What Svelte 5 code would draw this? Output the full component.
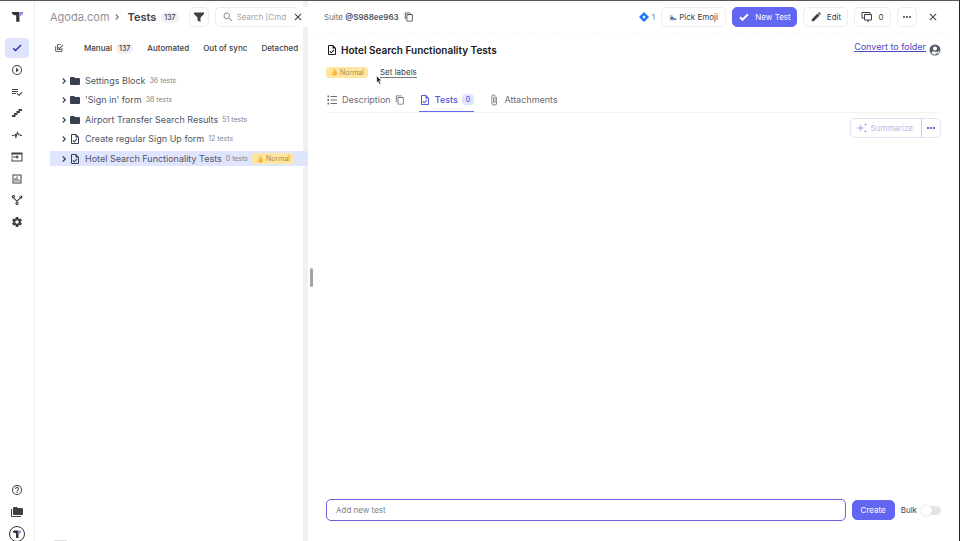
<script>
	const icons = {
		check: "M21 7 9 19l-5.500-5.500 1.900-1.900L9 15.200 19.100 5.100z",
		play: "M12 20a8 8 0 0 1 0-16 8 8 0 0 1 0 16m0-18a10 10 0 1 0 0 20 10 10 0 0 0 0-20m-2 14.500 6-4.500-6-4.500z",
		listCheck: "M14 10H2v2h12zm0-4H2v2h12zM2 16h8v-2H2zm19.500-4.500L23 13l-6.990 7-4.510-4.500L13 14l3.010 3z",
		stairs: "M15 4h7v4h-4v4h-5v4H9v4H2v-4h4v-4h5V8h4z",
		pulse: "M2 12h4l2-3 2 2 3-7 3 7 2-1 2 2h2v2h-3l-2-2-2 1-2-4-3 11-3-8-2 2H2z",
		importBox: "M1 3h22v18H1v-6h2v4h18V7H3v2H1zm10 5 5 4-5 4v-3H1v-2h10z",
		chart: "M3 3h18v18H3zm2 2v14h14V5zm2 5h2v7H7zm4-3h2v10h-2zm4 6h2v4h-2z",
		branch: "M5 2a3 3 0 0 1 1.500 5.600L12 13l5.500-5.400a3 3 0 1 1 1.700 1.200L13 15v1.200a3 3 0 1 1-2 0V15L4.800 8.800A3.400 3.400 0 0 1 5 2m0 2a1 1 0 1 0 0 2 1 1 0 0 0 0-2m14 0a1 1 0 1 0 0 2 1 1 0 0 0 0-2m-7 14a1 1 0 1 0 0 2 1 1 0 0 0 0-2",
		gear: "M12 15.500A3.500 3.500 0 0 1 8.500 12 3.500 3.500 0 0 1 12 8.500a3.500 3.500 0 0 1 3.500 3.500 3.500 3.500 0 0 1-3.500 3.500m7.430-2.530c.04-.32.07-.64.07-.97s-.03-.66-.07-1l2.110-1.630c.19-.15.24-.42.12-.64l-2-3.460c-.12-.22-.39-.31-.61-.22l-2.490 1c-.52-.39-1.060-.73-1.690-.98l-.37-2.650A.506.506 0 0 0 14 2h-4c-.25 0-.46.18-.5.42l-.37 2.650c-.63.25-1.170.59-1.690.98l-2.490-1c-.22-.09-.49 0-.61.22l-2 3.460c-.13.22-.07.49.12.64L4.570 11c-.04.34-.07.67-.07 1s.03.65.07.97l-2.110 1.660c-.19.15-.25.42-.12.64l2 3.460c.12.22.39.3.61.22l2.490-1.010c.52.4 1.060.74 1.690.99l.37 2.650c.04.24.25.42.5.42h4c.25 0 .46-.18.5-.42l.37-2.650c.63-.26 1.170-.59 1.690-.99l2.490 1.010c.22.08.49 0 .61-.22l2-3.460c.12-.22.07-.49-.12-.64z",
		help: "M11 18h2v-2h-2zm1-16a10 10 0 1 0 0 20 10 10 0 0 0 0-20m0 18a8 8 0 0 1 0-16 8 8 0 0 1 0 16m0-14a4 4 0 0 0-4 4h2a2 2 0 0 1 4 0c0 2-3 1.750-3 5h2c0-2.250 3-2.500 3-5a4 4 0 0 0-4-4",
		folders: "M22 4h-8l-2-2H6a2 2 0 0 0-2 2v12a2 2 0 0 0 2 2h16a2 2 0 0 0 2-2V6a2 2 0 0 0-2-2M2 6H0v14a2 2 0 0 0 2 2h18v-2H2z",
		folder: "M10 4H4a2 2 0 0 0-2 2v12a2 2 0 0 0 2 2h16a2 2 0 0 0 2-2V8a2 2 0 0 0-2-2h-8z",
		file: "M14 2H6a2 2 0 0 0-2 2v16a2 2 0 0 0 2 2h12a2 2 0 0 0 2-2V8zm4 18H6V4h7v5h5zm-7.500-1L7 15.500 8.500 14l2 2 5-5 1.500 1.500z",
		chevron: "M8 17 13 12 8 7l2-2 7 7-7 7z",
		checks: "M20 12v7a2 2 0 0 1-2 2H6a3 3 0 0 1-3-3V8h2v10l1 1h12v-7zM16 3H9a2 2 0 0 0-2 2v10a2 2 0 0 0 2 2h8a2 2 0 0 0 2-2v-4l-2 2v2H9V5h7zm5 1 1.500 1.500L13 15l-4-4 1.500-1.500L13 12z",
		filter: "M2 3h20v3l-7 7v9l-6-3v-6L2 6z",
		search: "M9.500 3a6.500 6.500 0 0 1 4.940 10.730l.27.27h.79l5 5-1.500 1.500-5-5v-.79l-.27-.27A6.500 6.500 0 1 1 9.500 3m0 2a4.500 4.500 0 1 0 0 9 4.500 4.500 0 0 0 0-9",
		close: "M19 6.410 17.590 5 12 10.590 6.410 5 5 6.410 10.590 12 5 17.590 6.410 19 12 13.410 17.590 19 19 17.590 13.410 12z",
		copy: "M19 21H8V7h11m0-2H8a2 2 0 0 0-2 2v14a2 2 0 0 0 2 2h11a2 2 0 0 0 2-2V7a2 2 0 0 0-2-2m-3-4H4a2 2 0 0 0-2 2v14h2V3h12z",
		boldCheck: "M9 20.400 2.600 14l2.800-2.800L9 14.700 18.600 5.100l2.800 2.800z",
		pencil: "m3 21 1-5L15 5l4 4L8 20zM16 4l2-2 4 4-2 2z",
		comments: "M3 2h14a2 2 0 0 1 2 2v2h1a2 2 0 0 1 2 2v9a2 2 0 0 1-2 2h-3l-4 4v-4H8a2 2 0 0 1-2-2v-2H3a2 2 0 0 1-2-2V4a2 2 0 0 1 2-2m0 2v9h3V8a2 2 0 0 1 2-2h9V4zm5 4v9h12V8z",
		dots: "M16 12a2 2 0 1 1 4 0 2 2 0 0 1-4 0m-6 0a2 2 0 1 1 4 0 2 2 0 0 1-4 0m-6 0a2 2 0 1 1 4 0 2 2 0 0 1-4 0",
		list: "M9 4h13v2H9zm0 7h13v2H9zm0 7h13v2H9zM3 3h3v4H3zm0 7h3v4H3zm0 7h3v4H3z",
		clip: "M16.500 6v11.500a4 4 0 0 1-8 0V5a2.500 2.500 0 0 1 5 0v10.500a1 1 0 0 1-2 0V6H10v9.500a2.500 2.500 0 0 0 5 0V5a4 4 0 0 0-8 0v12.500a5.500 5.500 0 0 0 11 0V6z",
		sparkle: "m9 4 2 6 6 2-6 2-2 6-2-6-6-2 6-2zM19 1l1 3 3 1-3 1-1 3-1-3-3-1 3-1zm0 14 1 3 3 1-3 1-1 3-1-3-3-1 3-1z",
		user: "M12 1a11 11 0 1 0 0 22 11 11 0 0 0 0-22M5 18c0-2 4-4 7-3l3 4-2 2c-3 0-6-1-8-3m10-3 2 2 4-4v3l-4 4-4-4zM12 5a4 4 0 1 1 0 8 4 4 0 0 1 0-8"
	};

	const nav = [
		["Tests", "check"],
		["Runs", "play"],
		["Plans", "listCheck"],
		["Steps", "stairs"],
		["Pulse", "pulse"],
		["Imports", "importBox"],
		["Analytics", "chart"],
		["Branches", "branch"],
		["Settings", "gear"]
	];

	const suites = [
		{ name: "Settings Block", count: 36, icon: "folder" },
		{ name: "'Sign in' form", count: 38, icon: "folder" },
		{ name: "Airport Transfer Search Results", count: 51, icon: "folder" },
		{ name: "Create regular Sign Up form", count: 12, icon: "file" },
		{ name: "Hotel Search Functionality Tests", count: 0, icon: "file", active: true }
	];

	let title = $state("");
	let bulk = $state(false);
</script>

{#snippet icon(name)}
	<svg class="icon icon-{name}" viewBox="0 0 24 24" aria-hidden="true"><path d={icons[name]} fill-rule={name === "user" || name === "branch" ? "evenodd" : "nonzero"} /></svg>
{/snippet}

{#snippet logo()}
	<svg class="logo" viewBox="0 0 20 20" aria-hidden="true">
		<path class="ink" d="M1 3h12v15H8V8H5Q1 7 1 3" />
		<path class="accent" d="M14 3h5q0 4-3 5l-2 2z" />
	</svg>
{/snippet}

{#snippet hand()}
	<svg class="hand" viewBox="0 0 16 16" aria-hidden="true">
		<path d="M4 9 8 7 7 2q1-2 2 0l2 4 2 1q2 5-1 8H6q-4-2-2-6" />
		<circle cx="6.500" cy="10" r="1.500" />
	</svg>
{/snippet}

<div class="app">
	<nav class="sidebar">
		<a class="brand" href="/" aria-label="Home">{@render logo()}</a>
		<ul>
			{#each nav as [label, glyph], i}
				<li><a href="#{glyph}" class:active={i === 0} aria-label={label}>{@render icon(glyph)}</a></li>
			{/each}
		</ul>
		<div class="bottom">
			<a href="#help" aria-label="Help">{@render icon("help")}</a>
			<a href="#projects" aria-label="Projects">{@render icon("folders")}</a>
			<a href="#account" class="account" aria-label="Account">{@render logo()}</a>
		</div>
	</nav>

	<section class="tree">
		<header>
			<a class="project" href="#project">Agoda.com</a>
			<span class="sep">{@render icon("chevron")}</span>
			<h1>Tests</h1>
			<span class="count">137</span>
			<button class="btn square" aria-label="Filter">{@render icon("filter")}</button>
			<label class="search">
				{@render icon("search")}
				<input type="text" placeholder="Search [Cmd + K]" aria-label="Search" />
			</label>
			<button class="collapse" aria-label="Close panel">{@render icon("close")}</button>
		</header>
		<div class="filters">
			<button class="multi" aria-label="Select many">{@render icon("checks")}</button>
			<button>Manual <span class="count">137</span></button>
			<button>Automated</button>
			<button>Out of sync</button>
			<button>Detached</button>
		</div>
		<ul class="suites">
			{#each suites as suite}
				<li class:active={suite.active}>
					{@render icon("chevron")}
					{@render icon(suite.icon)}
					<a href="#suite">{suite.name}</a>
					<small>{suite.count} tests</small>
					{#if suite.active}
						<span class="tag">{@render hand()}Normal</span>
					{/if}
				</li>
			{/each}
		</ul>
		<span class="peek"></span>
	</section>

	<div class="divider"><span class="grip"></span></div>

	<main>
		<header>
			<span class="suite-id">Suite <b>@S988ee963</b></span>
			<button aria-label="Copy id">{@render icon("copy")}</button>
			<div class="actions">
				<a class="jira" href="#jira">
					<svg viewBox="0 0 12 12" aria-hidden="true">
						<path d="M6 0 12 6 6 12 0 6zM6 4 4 6 6 8 8 6z" fill-rule="evenodd" />
					</svg>1
				</a>
				<button class="btn emoji">
					<svg viewBox="0 0 16 14" aria-hidden="true">
						<path class="frame" d="M2 12V3h5M2 12h13v-2" />
						<path class="hill" d="M3 11V7l3-3 3 4 5 1v2z" />
					</svg>Pick Emoji
				</button>
				<button class="btn primary">{@render icon("boldCheck")}New Test</button>
				<button class="btn edit">{@render icon("pencil")}Edit</button>
				<button class="btn talk">{@render icon("comments")}0</button>
				<button class="btn square" aria-label="More">{@render icon("dots")}</button>
				<button class="dismiss" aria-label="Close">{@render icon("close")}</button>
			</div>
		</header>

		<div class="content">
			<div class="heading">
				{@render icon("file")}
				<h2>Hotel Search Functionality Tests</h2>
				<a class="convert" href="#convert">Convert to folder</a>
				<span class="owner">{@render icon("user")}</span>
			</div>
			<div class="labels">
				<span class="tag">{@render hand()}Normal</span>
				<a href="#labels">Set labels
					<svg class="cursor" viewBox="0 0 10 14" aria-hidden="true"><path d="M1 1v10l2-2 2 4 2-1-2-4h3z" /></svg>
				</a>
			</div>
			<div class="tabs">
				<button>{@render icon("list")}Description{@render icon("copy")}</button>
				<button class="active">{@render icon("file")}Tests<span class="num">0</span></button>
				<button>{@render icon("clip")}Attachments</button>
			</div>
			<div class="summary">
				<button disabled>{@render icon("sparkle")}Summarize</button>
				<button class="more" aria-label="More options">{@render icon("dots")}</button>
			</div>
			<form onsubmit={(e) => e.preventDefault()}>
				<input class="title" type="text" placeholder="Add new test" aria-label="Add new test" bind:value={title} />
				<button class="btn primary">Create</button>
				<label class="bulk">Bulk <input type="checkbox" bind:checked={bulk} /></label>
			</form>
		</div>
	</main>
</div>

<style>
	:global(body) {
		background: #fff;
	}

	.app, .app * {
		box-sizing: border-box;
	}

	.app {
		display: flex;
		height: 100vh;
		overflow: hidden;
		border-top: 1px solid #58585b;
		border-right: 1px solid #222;
		font-family: Inter, "Liberation Sans", sans-serif;
		font-size: 8px;
		line-height: 16px;
		color: #404044;
	}

	button, input {
		font: inherit;
		color: inherit;
	}

	button {
		display: flex;
		align-items: center;
		padding: 0;
		border: 0;
		background: none;
		white-space: nowrap;
	}

	a {
		color: inherit;
		text-decoration: none;
	}

	ul {
		list-style: none;
		margin: 0;
		padding: 0;
	}

	h1, h2 {
		margin: 0;
		font-weight: 600;
		white-space: nowrap;
	}

	.icon {
		flex: none;
		width: 12px;
		height: 12px;
		fill: currentColor;
	}

	.icon-chevron, .icon-copy, .icon-checks {
		width: 10px;
		height: 10px;
	}

	.logo {
		width: 13px;
		height: 13px;
	}

	.ink {
		fill: #333338;
	}

	.accent {
		fill: #8a88ee;
	}

	/* Left icon rail */
	.sidebar {
		flex: none;
		width: 35px;
		display: flex;
		flex-direction: column;
		align-items: center;
		border-right: 1px solid #ededf0;
	}

	.sidebar a {
		width: 24px;
		height: 20px;
		display: flex;
		align-items: center;
		justify-content: center;
		border-radius: 4px;
	}

	.sidebar .brand {
		margin: 5px 0 12px;
	}

	.sidebar ul {
		height: 194px;
		display: flex;
		flex-direction: column;
		justify-content: space-between;
	}

	.sidebar .active {
		background: #dfe4fd;
		color: #3426a5;
	}

	.bottom {
		margin: auto 0 -3px;
		display: flex;
		flex-direction: column;
		align-items: center;
		gap: 2px;
	}

	.account .logo {
		width: 16px;
		height: 16px;
		padding: 2px;
		border: 1px solid #333338;
		border-radius: 50%;
	}

	/* Suite tree */
	.tree {
		flex: none;
		width: 268px;
		padding-left: 15px;
		position: relative;
	}

	.tree header {
		display: flex;
		align-items: center;
		height: 32px;
		overflow: hidden;
	}

	.project {
		color: #929296;
		font-size: 11px;
	}

	.sep {
		display: flex;
		margin: 0 6px 0 2px;
		color: #77777b;
	}

	h1 {
		font-size: 11px;
	}

	.count {
		padding: 0 3px;
		border-radius: 5px;
		background: #f1f1f3;
		font-size: 7px;
		line-height: 11px;
		font-weight: 500;
	}

	.tree header .count {
		margin: 0 10px 0 5px;
	}

	.btn {
		height: 20px;
		justify-content: center;
		gap: 5px;
		flex: none;
		border: 1px solid #ededf0;
		border-radius: 5px;
		background: #fff;
	}

	.square {
		width: 20px;
	}

	.search {
		flex: none;
		width: 100px;
		height: 20px;
		margin-left: 6px;
		padding-left: 6px;
		display: flex;
		align-items: center;
		gap: 3px;
		border: 1px solid #ededf0;
		border-radius: 5px;
		color: #929296;
	}

	.search input {
		width: 70px;
		padding: 0;
		border: 0;
		outline: 0;
		background: none;
	}

	.search input::placeholder {
		color: #a5a5aa;
	}

	.collapse {
		position: absolute;
		right: -5px;
		top: 6px;
		width: 20px;
		height: 20px;
		justify-content: center;
		border-radius: 10px 0 0 10px;
		background: #fff;
		z-index: 2;
	}

	.filters {
		display: flex;
		align-items: center;
		height: 30px;
		gap: 14px;
		padding-left: 4px;
		font-weight: 500;
	}

	.filters button {
		gap: 4px;
	}

	.filters .multi {
		margin-right: 6px;
	}

	.suites {
		height: 93px;
		margin-top: 10px;
		display: flex;
		flex-direction: column;
		justify-content: space-between;
		font-size: 9px;
		color: #505564;
	}

	.suites li {
		display: flex;
		align-items: center;
		height: 15px;
		padding-left: 9px;
		white-space: nowrap;
	}

	.suites li.active {
		margin-right: -5px;
		background: #dfe5fd;
		position: relative;
		z-index: 1;
	}

	.suites .icon {
		color: #384052;
	}

	.suites a {
		margin: 0 4px;
	}

	.suites small {
		font-size: 7px;
		color: #85858c;
	}

	.suites .tag {
		margin-left: 4px;
	}

	.tag {
		display: flex;
		align-items: center;
		gap: 2px;
		padding: 0 4px;
		border-radius: 3px;
		background: #fee6a2;
		color: #b28a42;
		font-size: 7px;
		line-height: 11px;
	}

	.hand {
		width: 8px;
		height: 8px;
		fill: #f6b52b;
	}

	.hand circle {
		fill: #fee6a2;
	}

	.peek {
		position: absolute;
		left: 19px;
		bottom: 0;
		width: 13px;
		height: 1px;
		background: #dedee3;
	}

	.divider {
		flex: none;
		width: 5px;
		position: relative;
		background: #f1f1f2;
	}

	.grip {
		position: absolute;
		left: 7px;
		top: calc(50% - 3px);
		width: 3px;
		height: 19px;
		border-radius: 2px;
		background: #a4a4a8;
	}

	/* Suite details */
	main {
		flex: 1;
		min-width: 0;
		display: flex;
		flex-direction: column;
	}

	main header {
		display: flex;
		align-items: center;
		gap: 5px;
		height: 33px;
		padding: 0 16px;
		border-bottom: 1px dashed #f6f6f7;
	}

	.suite-id {
		color: #6b7180;
	}

	.suite-id b {
		font-weight: 600;
		color: #505564;
	}

	.actions {
		margin-left: auto;
		display: flex;
		align-items: center;
		gap: 6px;
	}

	.jira {
		display: flex;
		align-items: center;
		gap: 3px;
		color: #77777b;
	}

	.jira svg {
		width: 10px;
		height: 10px;
		fill: #1c74f5;
	}

	.emoji {
		width: 65px;
		gap: 2px;
	}

	.emoji svg {
		width: 8px;
		height: 7px;
		fill: none;
	}

	.emoji .frame {
		stroke: #8a929b;
	}

	.emoji .hill {
		fill: #346ca8;
	}

	.primary {
		width: 65px;
		border-color: #6366f1;
		background: #6366f1;
		color: #fff;
	}

	.edit {
		width: 45px;
	}

	.talk {
		width: 37px;
	}

	.dismiss {
		width: 20px;
		height: 20px;
		justify-content: center;
	}

	.content {
		flex: 1;
		display: flex;
		flex-direction: column;
		padding: 7px 18px 20px 18px;
	}

	.heading {
		display: flex;
		align-items: center;
		gap: 3px;
		height: 18px;
		color: #18181b;
	}

	h2 {
		font-size: 10px;
	}

	.convert {
		align-self: flex-start;
		margin-left: auto;
		color: #4f46c5;
		font-size: 9px;
		line-height: 12px;
		text-decoration: underline;
	}

	.owner {
		display: flex;
		color: #555d6c;
	}

	.labels {
		display: flex;
		align-items: center;
		gap: 12px;
		height: 26px;
	}

	.labels a {
		position: relative;
		line-height: 10px;
		border-bottom: 1px solid #77777b;
	}

	.cursor {
		position: absolute;
		left: -4px;
		top: 8px;
		width: 7px;
		height: 10px;
		fill: #18181b;
		stroke: #fff;
	}

	.tabs {
		display: flex;
		gap: 14px;
		border-bottom: 1px solid #f4f4f5;
		color: #6c6c72;
		font-size: 9px;
	}

	.tabs button {
		height: 27px;
		padding-top: 3px;
		gap: 4px;
		border-bottom: 1px solid transparent;
	}

	.tabs .active {
		border-color: #6366f1;
		color: #5b55dc;
		font-weight: 500;
	}

	.num {
		padding: 0 4px;
		border-radius: 4px;
		background: #dfe5fd;
		font-size: 7px;
		line-height: 11px;
	}

	.summary {
		align-self: flex-end;
		display: flex;
		margin-top: 5px;
		border: 1px solid #e3e3f5;
		border-radius: 5px;
	}

	.summary button {
		height: 18px;
		gap: 3px;
		padding: 0 8px 0 5px;
		color: #bbb7e8;
	}

	.summary .more {
		padding: 0 3px;
		border-left: 1px solid #d3d0f4;
		color: #3f32b6;
	}

	form {
		margin-top: auto;
		display: flex;
		align-items: center;
		gap: 6px;
	}

	.title {
		flex: 1;
		min-width: 0;
		height: 22px;
		padding: 0 9px;
		border: 1px solid #6862db;
		border-radius: 5px;
		outline: 0;
	}

	.title::placeholder {
		color: #7b7f89;
	}

	form .primary {
		width: 43px;
	}

	.bulk {
		display: flex;
		align-items: center;
		gap: 4px;
	}

	.bulk input {
		appearance: none;
		display: flex;
		align-items: center;
		width: 20px;
		height: 9px;
		margin: 0;
		border-radius: 5px;
		background: #e4e4e8;
	}

	.bulk input::before {
		content: "";
		width: 11px;
		height: 11px;
		border-radius: 50%;
		background: #fff;
		box-shadow: 0 0 1px #aaa;
	}

	.bulk input:checked::before {
		margin-left: auto;
	}
</style>
